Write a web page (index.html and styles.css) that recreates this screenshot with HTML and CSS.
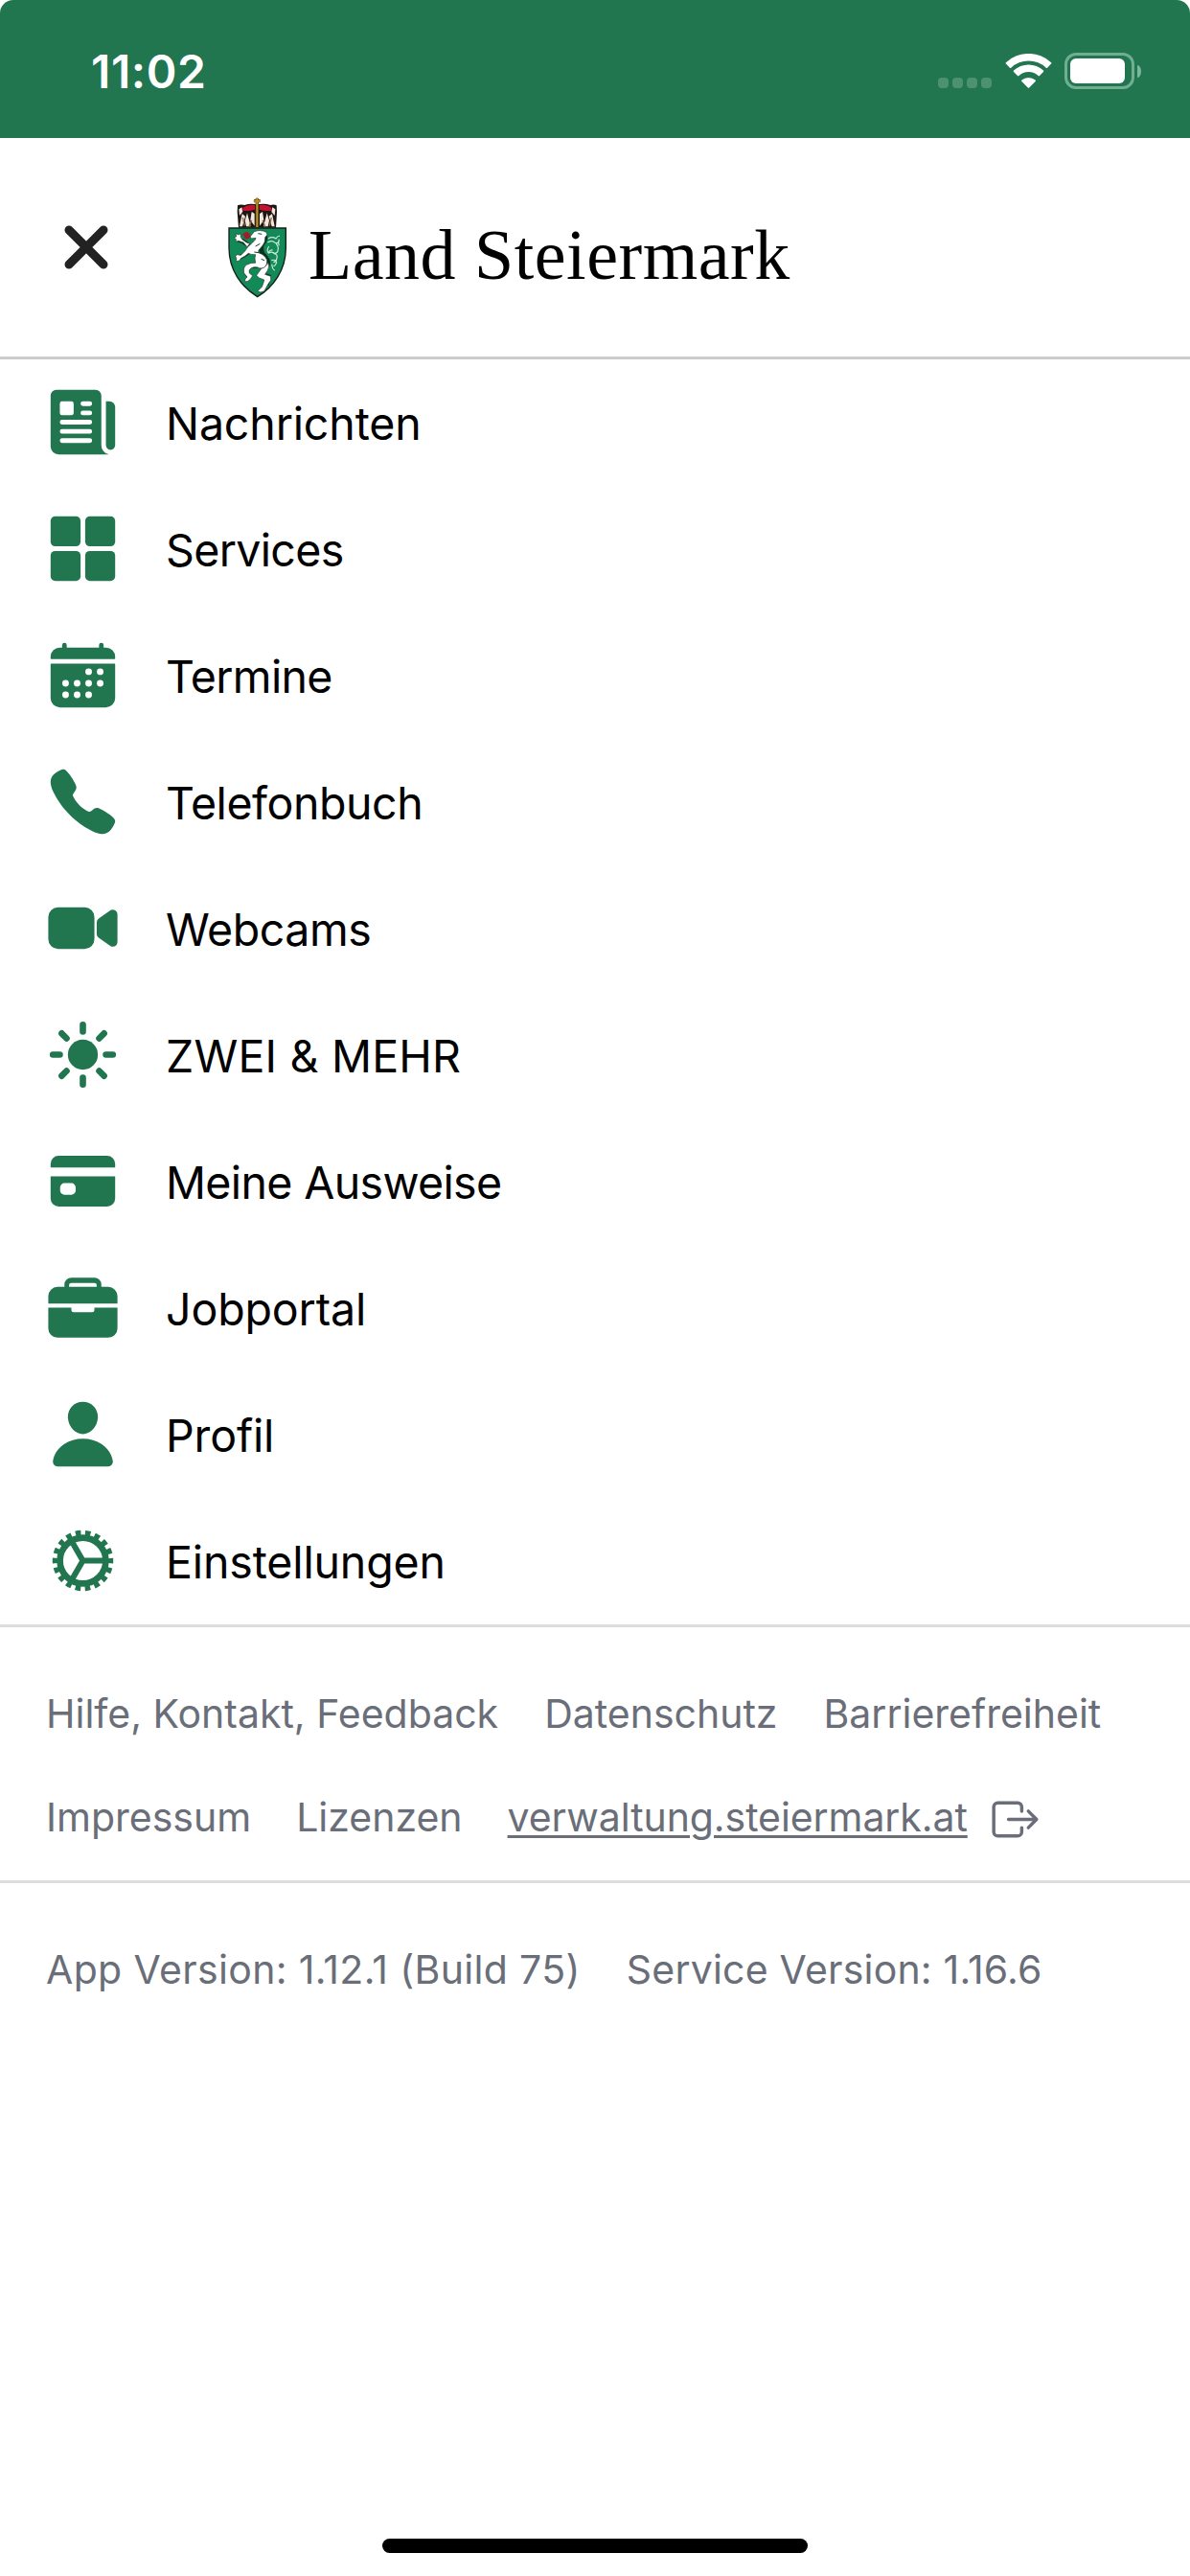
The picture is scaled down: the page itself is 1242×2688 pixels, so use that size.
FILE: index.html
```html
<!DOCTYPE html>
<html lang="de">
<head>
    <meta charset="UTF-8">
    <meta name="viewport" content="width=device-width, initial-scale=1.0">
    <title>Land Steiermark</title>
    <link rel="stylesheet" href="styles.css">
</head>
<body>
    <div class="status-bar">
        <span class="time">11:02</span>
        <div class="status-icons">
            <div class="signal"><i></i><i></i><i></i><i></i></div>
            <svg class="wifi" viewBox="0 0 49 37">
                <path d="M.9 10.6a.9.9 0 0 1 0-1.3 34.4 34.4 0 0 1 47.2 0 .9.9 0 0 1 0 1.3l-4 4.1a1 1 0 0 1-1.4 0 26.5 26.5 0 0 0-36.4 0 1 1 0 0 1-1.4 0z"/>
                <path d="M9 19a1 1 0 0 1 0-1.4 22.6 22.6 0 0 1 31 0 1 1 0 0 1 0 1.4l-4 4.1a1 1 0 0 1-1.4 0 14.8 14.8 0 0 0-20.2 0 1 1 0 0 1-1.4 0z"/>
                <path d="M17.4 29a1 1 0 0 1 0-1.5 11 11 0 0 1 14.2 0 1 1 0 0 1 0 1.5l-6.400 6.500a1 1 0 0 1-1.400 0z"/>
            </svg>
            <div class="battery"><div class="battery-level"></div></div>
            <div class="battery-cap"></div>
        </div>
    </div>

    <header class="header">
        <svg class="close" viewBox="0 0 46 46"><path d="M5 5l36 36M41 5L5 41"/></svg>
        <!-- Landeswappen -->
        <svg class="crest" viewBox="54 44 186 318">
            <path d="M84 72q10-5 22-1 14-6 34-3h12q20-3 34 3 12-4 20 1l1 20-3 50H87l-4-50z" fill="#1d1614"/>
            <path d="M100 80q14-12 38-9v14q-18 6-38 3zM152 71q24-3 38 9v8q-20 3-38-3z" fill="#c4122f"/>
            <path d="M88 84l9-6 3 14-10 12zM202 84l-9-6-3 14 10 12zM98 98l10 8-9 32h-9zM114 96l11 42h-14l-4-18zM128 92l9 6v38l-13-18zM192 98l-10 8 9 32h9zM176 96l-11 42h14l4-18zM162 92l-9 6v38l13-18z" fill="#f1e7dd"/>
            <path d="M100 110l6 26M128 118l-8 20M190 110l-6 26M162 118l8 20" stroke="#9a6c4c" stroke-width="4"/>
            <path d="M145 50v90M135 58h20" stroke="#4c3b0e" stroke-width="10"/>
            <path d="M145 48v92M134 58h22" stroke="#b9922c" stroke-width="6"/>
            <path d="M57 143h178v62c0 68-38 122-89 153-51-31-89-85-89-153z" fill="#118a57" stroke="#131f19" stroke-width="4"/>
            <!-- Panther -->
            <g class="panther-shadow">
                <path d="M170 168q2 16-12 28M160 196q-6 20 8 34 14 14 10 30M124 202l-24-18-14-4M124 214l-20 14-20 10" stroke-width="14"/>
                <path d="M110 268q-4 18 12 28M166 262l-10 24 26 8-6 28" stroke-width="12"/>
            </g>
            <g class="panther">
                <path d="M136 154q14-6 28-2l10 4 3 8-7 8q2 14-8 26-10 12-12 14l-1 8q14 4 22 14 8 10 4 22l-6 12q-10 2-18 0-16-6-24 0-10 6-6 16l10 8-6 10-10 8h-9l2-8 6-6-10-12q-4-18 8-26 14-8 28-6-4-14 0-26-12 2-22-4l-10 8-14 8-4 7-11 2 1-10-3-6 6-5 11 2 13-13 8-12 16-15q10-8 10-14l-14 2-4-6z"/>
                <path d="M114 202l-12-14-16-5-8 3 1-8-7-6 8-2-2-10 9 4 6-4 1 12 6 8 12 8 10 4z"/>
                <path d="M158 270q16-4 20-20 8 12 0 26l-8 12 18 6v12l-8 12-8 14-4 8-12 4-10-3 8-8 6-6 5-14 2-8-16-6-8-8z"/>
            </g>
            <path d="M102 160l10-6 8 4 4 8-2 8-10 4-8-5 1-6-8-2z" fill="#a01e28"/>
            <path d="M148 160l12 2M140 200l14-8M136 218l14 2M132 268l16-2M158 240l10 4" class="panther-lines"/>
            <path class="tail" d="M180 176q12-8 24 0 6-10 12-8M178 188q14-8 22 0 10 6 14-6M182 200q-8 12-2 20 6-10 14-8M204 192q10 8 6 20 0 10-12 10M180 222q14-8 20 2M196 222q16 2 10 18-2 10-10 10M190 244q14-4 16 6-4 12-10 12M192 256q-2 12 8 20M214 178q-4 12 0 20"/>
        </svg>
        <span class="title">Land Steiermark</span>
    </header>

    <nav class="menu">
        <a class="menu-item">
            <svg viewBox="0 0 512 512">
                <path d="M439.910 112h-23.820a.09.09 0 0 0-.09.09V416a32 32 0 0 0 32 32 32 32 0 0 0 32-32V152.090A40.090 40.090 0 0 0 439.910 112z"/>
                <path fill-rule="evenodd" d="M384 416V72a40 40 0 0 0-40-40H72a40 40 0 0 0-40 40v352a56 56 0 0 0 56 56h342.850a1.140 1.140 0 0 0 .3-2.250A64.110 64.110 0 0 1 384 416zM96 128a16 16 0 0 1 16-16h64a16 16 0 0 1 16 16v64a16 16 0 0 1-16 16h-64a16 16 0 0 1-16-16zm208 272H112a16 16 0 0 1 0-32h192a16 16 0 0 1 0 32zm0-64H112a16 16 0 0 1 0-32h192a16 16 0 0 1 0 32zm0-64H112a16 16 0 0 1 0-32h192a16 16 0 0 1 0 32zm0-64h-48a16 16 0 0 1 0-32h48a16 16 0 0 1 0 32zm0-64h-48a16 16 0 0 1 0-32h48a16 16 0 0 1 0 32z"/>
            </svg>
            <span>Nachrichten</span>
        </a>
        <a class="menu-item">
            <svg viewBox="0 0 512 512">
                <rect x="32" y="32" width="208" height="208" rx="32"/>
                <rect x="272" y="32" width="208" height="208" rx="32"/>
                <rect x="32" y="272" width="208" height="208" rx="32"/>
                <rect x="272" y="272" width="208" height="208" rx="32"/>
            </svg>
            <span class="tight">Services</span>
        </a>
        <a class="menu-item">
            <svg viewBox="0 0 512 512">
                <path d="M480 128a64 64 0 0 0-64-64h-16V48a16 16 0 0 0-32 0v16H144V48a16 16 0 0 0-32 0v16H96a64 64 0 0 0-64 64v12a4 4 0 0 0 4 4h440a4 4 0 0 0 4-4zM32 416a64 64 0 0 0 64 64h320a64 64 0 0 0 64-64V179a3 3 0 0 0-3-3H35a3 3 0 0 0-3 3z"/>
                <g fill="#fff">
                    <circle cx="296" cy="232" r="23"/><circle cx="376" cy="232" r="23"/>
                    <circle cx="136" cy="312" r="23"/><circle cx="216" cy="312" r="23"/><circle cx="296" cy="312" r="23"/><circle cx="376" cy="312" r="23"/>
                    <circle cx="136" cy="392" r="23"/><circle cx="216" cy="392" r="23"/><circle cx="296" cy="392" r="23"/>
                </g>
            </svg>
            <span class="tight">Termine</span>
        </a>
        <a class="menu-item">
            <svg viewBox="0 0 512 512">
                <path d="M391 480c-19.520 0-46.940-7.060-88-30-49.930-28-88.550-53.850-138.210-103.380C116.910 298.770 93.610 267.790 61 208.450c-36.840-67-30.560-102.120-23.540-117.130C45.820 73.380 58.160 62.650 74.110 52a176.300 176.300 0 0 1 28.640-15.200c1-.43 1.930-.84 2.760-1.210 4.950-2.230 12.450-5.600 21.950-2 6.340 2.380 12 7.250 20.860 16 18.170 17.920 43 57.830 52.160 77.430 6.150 13.210 10.220 21.930 10.230 31.710 0 11.450-5.760 20.280-12.750 29.810-1.310 1.790-2.610 3.500-3.870 5.160-7.610 10-9.280 12.890-8.180 18.050 2.230 10.370 18.860 41.240 46.190 68.510s57.310 42.850 67.720 45.070c5.380 1.150 8.330-.59 18.650-8.470 1.480-1.130 3-2.300 4.590-3.470 10.660-7.930 19.080-13.540 30.260-13.540h.06c9.730 0 18.060 4.220 31.860 11.180 18 9.080 59.110 33.590 77.140 51.780 8.770 8.840 13.660 14.480 16.050 20.810 3.600 9.530.21 17-2 22-.37.83-.78 1.740-1.210 2.750a176.490 176.490 0 0 1-15.290 28.580c-10.630 15.900-21.400 28.210-39.380 36.580A67.420 67.420 0 0 1 391 480z"/>
            </svg>
            <span class="snug">Telefonbuch</span>
        </a>
        <a class="menu-item">
            <svg viewBox="0 0 512 512">
                <path d="M464 384.390a32 32 0 0 1-13-2.770 15.770 15.770 0 0 1-2.710-1.540l-82.710-58.220A32 32 0 0 1 352 295.700v-79.400a32 32 0 0 1 13.580-26.160l82.710-58.220a15.770 15.770 0 0 1 2.710-1.540 32 32 0 0 1 45 29.240v192.760a32 32 0 0 1-32 32zM268 400H84a68.070 68.070 0 0 1-68-68V180a68.070 68.070 0 0 1 68-68h184.480A67.600 67.600 0 0 1 336 179.520V332a68.070 68.070 0 0 1-68 68z"/>
            </svg>
            <span class="snug">Webcams</span>
        </a>
        <a class="menu-item">
            <svg viewBox="0 0 512 512">
                <circle cx="256" cy="256" r="104"/>
                <path class="rays" d="M256 48v48M256 416v48M48 256h48M416 256h48M403.080 108.920l-33.940 33.940M142.860 369.140l-33.940 33.940M403.080 403.080l-33.940-33.940M142.860 142.860l-33.940-33.940"/>
            </svg>
            <span class="wide">ZWEI &amp; MEHR</span>
        </a>
        <a class="menu-item">
            <svg viewBox="0 0 512 512">
                <path fill-rule="evenodd" d="M32 376a56 56 0 0 0 56 56h336a56 56 0 0 0 56-56V222H32zm66-76a30 30 0 0 1 30-30h48a30 30 0 0 1 30 30v20a30 30 0 0 1-30 30h-48a30 30 0 0 1-30-30zM424 80H88a56 56 0 0 0-56 56v26h448v-26a56 56 0 0 0-56-56z"/>
            </svg>
            <span class="tight">Meine Ausweise</span>
        </a>
        <a class="menu-item">
            <svg viewBox="0 0 512 512">
                <path fill-rule="evenodd" d="M496 176a64 64 0 0 0-64-64h-48v-16a48 48 0 0 0-48-48H176a48 48 0 0 0-48 48v16H80a64 64 0 0 0-64 64v52h480zM352 112H160v-12a16 16 0 0 1 16-16h160a16 16 0 0 1 16 16z"/>
                <path d="M336 256v16a16 16 0 0 1-16 16H192a16 16 0 0 1-16-16v-16H16v144a64 64 0 0 0 64 64h352a64 64 0 0 0 64-64V256z"/>
            </svg>
            <span>Jobportal</span>
        </a>
        <a class="menu-item">
            <svg viewBox="0 0 512 512">
                <path d="M332.640 64.580C313.180 43.570 286 32 256 32c-30.160 0-57.430 11.500-76.800 32.380-19.580 21.110-29.120 49.800-26.880 80.780C156.760 206.280 203.270 256 256 256s99.160-49.710 103.670-110.820c2.270-30.700-7.330-59.330-27.030-80.600zM432 480H80a31 31 0 0 1-24.200-11.130c-6.500-7.770-9.120-18.380-7.180-29.110C57.060 392.940 83.400 353.610 124.800 326c36.780-24.510 83.370-38 131.200-38s94.420 13.500 131.200 38c41.400 27.600 67.740 66.930 76.180 113.750 1.940 10.730-.68 21.340-7.180 29.110A31 31 0 0 1 432 480z"/>
            </svg>
            <span>Profil</span>
        </a>
        <a class="menu-item">
            <svg viewBox="0 0 512 512">
                <circle class="gear-teeth" cx="256" cy="256" r="193" pathLength="360"/>
                <circle class="gear-ring" cx="256" cy="256" r="159"/>
                <path class="gear-spokes" d="M256 256h150M256 256l-75-130M256 256l-75 130"/>
            </svg>
            <span>Einstellungen</span>
        </a>
    </nav>

    <div class="links">
        <div class="row">
            <a>Hilfe, Kontakt, Feedback</a>
            <a>Datenschutz</a>
            <a>Barrierefreiheit</a>
        </div>
        <div class="row">
            <a>Impressum</a>
            <a>Lizenzen</a>
            <a class="external"><span>verwaltung.steiermark.at</span>
                <svg viewBox="0 0 512 512"><path d="M320 176v-40a40 40 0 0 0-40-40H88a40 40 0 0 0-40 40v240a40 40 0 0 0 40 40h192a40 40 0 0 0 40-40v-40M384 176l80 80-80 80M191 256h273"/></svg>
            </a>
        </div>
    </div>

    <div class="version">
        <div class="row">
            <span>App Version: 1.12.1 (Build 75)</span>
            <span class="service">Service Version: 1.16.6</span>
        </div>
    </div>

    <div class="home-indicator"></div>
</body>
</html>
```
FILE: styles.css
```css
* {
    box-sizing: border-box;
}
body {
    margin: 0;
    height: 2688px;
    display: flex;
    flex-direction: column;
    background: #fff;
    color: #000;
    font-family: Inter, "Liberation Sans", sans-serif;
    overflow: hidden;
}
svg {
    display: block;
    flex: none;
}

/* Statusleiste */
.status-bar {
    height: 144px;
    padding: 4px 51px 0 95px;
    display: flex;
    align-items: center;
    justify-content: space-between;
    background: #21754f;
    border-radius: 14px 14px 0 0;
}
.time {
    color: #fff;
    font-size: 48px;
    font-weight: 600;
    letter-spacing: 0.6px;
}
.status-icons {
    display: flex;
    align-items: center;
}
.signal {
    display: flex;
    gap: 4px;
    margin: 24px 14px 0 0;
}
.signal i {
    width: 11px;
    height: 11px;
    border-radius: 4px;
    background: #4d9270;
}
.wifi {
    width: 49px;
    height: 37px;
    fill: #fff;
}
.battery {
    width: 73px;
    height: 38px;
    margin-left: 13px;
    padding: 3px;
    border: 3px solid #6fae90;
    border-radius: 12px;
}
.battery-level {
    width: 57px;
    height: 26px;
    border-radius: 6px;
    background: #fff;
}
.battery-cap {
    width: 4px;
    height: 13px;
    margin-left: 3px;
    border-radius: 0 4px 4px 0 / 0 7px 7px 0;
    background: #7db79b;
}

/* Kopfzeile */
.header {
    height: 231px;
    padding-left: 67px;
    display: flex;
    align-items: center;
    border-bottom: 3px solid #ccc;
}
.close {
    width: 46px;
    height: 46px;
    fill: none;
    stroke: #222;
    stroke-width: 9;
    stroke-linecap: round;
}
.crest {
    width: 62px;
    height: 106px;
    margin-left: 125px;
    fill: none;
}
.panther {
    fill: #fff;
    stroke: #1d3a2c;
    stroke-width: 2;
}
.panther-shadow {
    stroke: #0c2f20;
}
.panther-lines {
    stroke: #1d3a2c;
    stroke-width: 3;
}
.tail {
    stroke: #cfe8dc;
    stroke-width: 3.5;
}
.title {
    margin-left: 22px;
    padding-top: 16px;
    font-family: "Liberation Serif", serif;
    font-size: 74px;
    line-height: 1;
    letter-spacing: 0.5px;
}

/* Menü */
.menu {
    border-bottom: 3px solid #ddd;
}
.menu-item {
    height: 132px;
    padding-left: 48px;
    display: flex;
    align-items: center;
    gap: 48px;
    font-size: 46.5px;
    letter-spacing: -0.14px;
}
.menu-item span {
    padding-top: 2px;
}
.menu-item svg {
    width: 77px;
    height: 77px;
    margin-top: -2px;
    fill: #21754f;
}
.tight {
    letter-spacing: -0.64px;
}
.snug {
    letter-spacing: -0.44px;
}
.wide {
    letter-spacing: 0.2px;
}
.rays {
    stroke: #21754f;
    stroke-width: 44;
    stroke-linecap: round;
}
.gear-teeth,
.gear-ring,
.gear-spokes {
    fill: none;
    stroke: #21754f;
}
.gear-teeth {
    stroke-width: 36;
    stroke-dasharray: 11 9;
    stroke-dashoffset: 5.5;
}
.gear-ring {
    stroke-width: 44;
}
.gear-spokes {
    stroke-width: 40;
}

/* Fußbereich */
.links,
.version {
    padding: 36px 48px 12px;
    color: #6a6e79;
    font-size: 41px;
}
.links {
    height: 267px;
    border-bottom: 3px solid #ddd;
}
.row {
    height: 108px;
    display: flex;
    align-items: center;
    gap: 48px;
    white-space: nowrap;
}
.row + .row {
    gap: 47px;
}
.external {
    display: flex;
    align-items: center;
    gap: 22px;
    letter-spacing: -0.08px;
}
.external span {
    text-decoration: underline;
    text-decoration-thickness: 3px;
    text-underline-offset: 4px;
}
.external svg {
    width: 55px;
    height: 55px;
    margin-top: 5px;
    fill: none;
    stroke: #6a6e79;
    stroke-width: 32;
    stroke-linecap: round;
    stroke-linejoin: round;
}
.version {
    letter-spacing: 0.34px;
}
.service {
    letter-spacing: 0.2px;
}

.home-indicator {
    width: 444px;
    height: 15px;
    margin: auto auto 24px;
    border-radius: 8px;
    background: #000;
}
```
